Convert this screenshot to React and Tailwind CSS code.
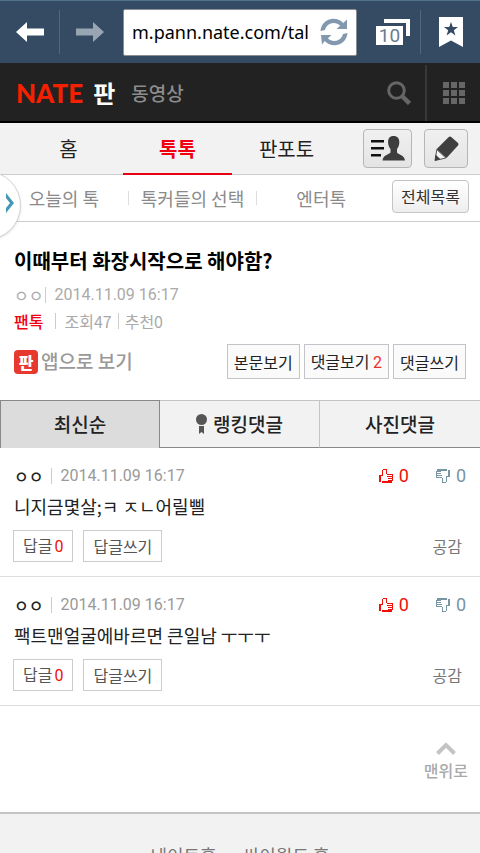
import clsx from "clsx";

const COMMENTS = [
  { id: 1, date: "2014.11.09 16:17", text: "니지금몇살;ㅋ ㅈㄴ어릴삘" },
  { id: 2, date: "2014.11.09 16:17", text: "팩트맨얼굴에바르면 큰일남 ㅜㅜㅜ" },
];

const SECTIONS = ["홈", "톡톡", "판포토"];
const CATEGORIES = ["오늘의 톡", "톡커들의 선택", "엔터톡"];

function ArrowIcon({ className }) {
  return (
    <svg viewBox="0 0 28 20" fill="currentColor" className={clsx("w-7 h-5", className)}>
      <path d="M0 10 11 0v6.5h17v7H11V20z" />
    </svg>
  );
}

function ReloadIcon() {
  return (
    <svg viewBox="0 0 28 28" className="w-7 h-7" fill="#8298ae">
      <path d="M.5 13C1 6 6.500 .8 13.500 .8c4.200 0 7.500 1.700 9.700 4.200L27 1.500V11H16.500l3.600-3.200C18.400 6 16.200 5 13.600 5 9.300 5 6 8 5 12z" />
      <path d="M27.500 15c-.5 7-6 12.200-13 12.200-4.200 0-7.500-1.700-9.700-4.200L2 26.500 1 17h10.500l-3.600 3.200c1.700 1.800 3.900 2.800 6.500 2.800 4.300 0 7.600-3 8.600-7z" />
    </svg>
  );
}

function ThumbIcon({ down, className }) {
  return (
    <svg
      viewBox="0 0 14 14"
      fill="currentColor"
      shapeRendering="crispEdges"
      className={clsx("w-[14px] h-[14px]", down && "rotate-180", className)}
    >
      <path d="M0 6h2v7H0zM3 12h10v2H3zM2 6h2v1H2zM3 1h1v6H3zM4 0h4v1H4zM7 1h1v4H7zM8 5h6v1H8zM13 6h1v6h-1zM8 7h5v1H8zM9 9h4v1H9zM9 11h4v1H9z" />
    </svg>
  );
}

function BrowserBar() {
  return (
    <div className="flex items-center h-[63px] bg-[#344b63] border-t border-[#4f7189]">
      <button type="button" aria-label="이전" className="flex items-center justify-center w-[60px] h-11 border-r border-[#53677b] text-white">
        <ArrowIcon />
      </button>
      <button type="button" aria-label="다음" className="flex items-center justify-center w-[59px] h-11 text-[#98a6b3]">
        <ArrowIcon className="-scale-x-100" />
      </button>
      <div className="flex flex-1 min-w-0 items-center h-[47px] ml-1 px-2 bg-white border border-[#8a8d91] rounded-xs">
        <input
          type="text"
          aria-label="주소"
          defaultValue="m.pann.nate.com/tal"
          className="flex-1 min-w-0 text-lg font-['Noto_Sans',sans-serif] text-black outline-none"
        />
        <button type="button" aria-label="새로고침">
          <ReloadIcon />
        </button>
      </div>
      <button type="button" aria-label="창 목록" className="flex items-center justify-center w-[64px] h-11 border-r border-[#53677b]">
        <svg viewBox="0 0 34 28" className="w-[34px] h-7 ml-2">
          <path d="M8 1h26v17h-4V5H8z" fill="#fff" />
          <path d="M0 8h27v19H0z" fill="#fff" />
          <text x="13.500" y="24" textAnchor="middle" className="font-['Roboto',sans-serif] text-[19px]" fill="#6a7b8f">
            10
          </text>
        </svg>
      </button>
      <button type="button" aria-label="북마크" className="flex items-center justify-center w-[59px] h-11">
        <svg viewBox="0 0 24 30" className="w-6 h-[30px]">
          <path d="M0 0h24v30l-12-6.500L0 30z" fill="#fff" />
          <path d="m12 5 1.800 5h5.200l-4.200 3.200 1.600 5.300-4.400-3.200-4.400 3.200 1.600-5.300L5 10h5.200z" fill="#344b63" />
        </svg>
      </button>
    </div>
  );
}

function SiteHeader() {
  return (
    <header className="flex items-center h-[60px] pt-[2px] pl-4 bg-[#222] border-b-2 border-black">
      <a href="#" className="font-['Lato',sans-serif] text-[26px] font-black text-[#f42000]">
        NATE
      </a>
      <a href="#" className="ml-[10px] text-2xl font-bold text-white">
        판
      </a>
      <a href="#" className="ml-4 text-[19px] font-medium text-[#8c8c8c]">
        동영상
      </a>
      <button type="button" aria-label="검색" className="flex items-center justify-center ml-auto w-[54px] h-full border-r-2 border-[#383838]">
        <svg viewBox="0 0 24 24" className="w-6 h-6" fill="none" stroke="#666">
          <circle cx="9.500" cy="9.500" r="7.800" strokeWidth="3" />
          <path d="m15 15 7.500 7.500" strokeWidth="4.500" />
        </svg>
      </button>
      <button type="button" aria-label="전체 메뉴" className="flex items-center justify-center w-[53px] h-full">
        <svg viewBox="0 0 22 22" className="w-[22px] h-[22px]" fill="#666">
          {[0, 8, 16].map((y) => [0, 8, 16].map((x) => <rect key={`${x}-${y}`} x={x} y={y} width="6" height="6" />))}
        </svg>
      </button>
    </header>
  );
}

function SectionNav() {
  const iconButton =
    "flex items-center justify-center h-[39px] rounded-sm border border-[#b5b5b5] bg-linear-to-b from-[#f0f0f0] to-[#e4e4e4]";

  return (
    <nav className="flex items-center h-[52px] pl-[14px] pr-3 bg-[#f2f2f2] border-b border-[#ccc]">
      <div className="flex flex-1 h-[52px] mr-[22px]">
        {SECTIONS.map((name) => (
          <a
            key={name}
            href="#"
            className={clsx(
              "flex flex-1 items-center justify-center text-xl",
              name === "톡톡" ? "pt-[2px] border-b-2 border-[#e60012] font-bold text-[#f00010]" : "text-[#222]"
            )}
          >
            {name}
          </a>
        ))}
      </div>
      <button type="button" aria-label="내 정보" className={clsx(iconButton, "w-[49px]")}>
        <svg viewBox="0 0 34 25" className="w-[34px] h-[25px]" fill="#3d3d3d">
          <path d="M0 4h13v2.500H0zM0 11h13v2.500H0zM0 18h10v2.500H0z" fill="#111" />
          <path d="M22.500 0c4 0 6 2.500 5.800 6.500-.1 3-1 5-2.300 6.500v3.500c1 2 7.500 2.500 8 8H11.500c.5-5.500 6.500-6 8-8V13c-1.300-1.500-2.300-3.500-2.400-6.500C17 2.500 18.500 0 22.500 0z" />
        </svg>
      </button>
      <button type="button" aria-label="글쓰기" className={clsx(iconButton, "w-11 ml-3")}>
        <svg viewBox="0 0 25 25" className="w-[25px] h-[25px]">
          <path d="M14.500 1.200q1.500-1.500 3 0l6.300 5.600q1.300 1.500 0 3L12.500 22 2.500 13.200z" fill="#3f3f3f" />
          <path d="M2.800 13.600 11.800 22 1 24.500z" fill="#f4f4f4" stroke="#555" />
          <path d="m1.500 18.500 5 4.700-5.700 1.600z" fill="#3f3f3f" />
        </svg>
      </button>
    </nav>
  );
}

function CategoryNav() {
  return (
    <nav className="relative flex items-center h-[47px] pr-[11px] border-b border-[#ccc]">
      <div className="flex flex-1 mr-[7px]">
        {CATEGORIES.map((name) => (
          <a
            key={name}
            href="#"
            className="flex flex-1 items-center justify-center h-[14px] text-lg whitespace-nowrap text-[#8a8a8a] border-r border-[#ddd] last:border-r-0"
          >
            {name}
          </a>
        ))}
      </div>
      <button type="button" className="w-[77px] h-[33px] mb-1 rounded-sm border border-[#c4c4c4] bg-linear-to-b from-white to-[#eee] text-base leading-7 text-[#333]">
        전체목록
      </button>
      {/* drawer handle, hangs over the left edge */}
      <button
        type="button"
        aria-label="메뉴 열기"
        className="absolute -left-12 -top-1 flex items-center justify-end w-[69px] h-[69px] pr-[6px] pb-[6px] rounded-full bg-white border border-[#d5d5d5] shadow"
      >
        <svg viewBox="0 0 8 20" className="w-2 h-5" fill="#4497b6">
          <path d="M0 0v5l4 5-4 5v5l8-10z" />
        </svg>
      </button>
    </nav>
  );
}

function Article() {
  const actionButton = "h-[35px] px-[6px] border border-[#c3c3c9] bg-[#fafafa] text-base text-[#222] whitespace-nowrap";

  return (
    <article className="px-[14px] pt-[25px] pb-[21px]">
      <h1 className="text-xl leading-7 font-bold text-black">이때부터 화장시작으로 해야함?</h1>
      <div className="flex items-center mt-[10px] h-5 text-base text-[#aaa]">
        <span>ㅇㅇ</span>
        <span className="w-px h-4 ml-[2px] mr-2 bg-[#ccc]" />
        <span className="font-['Roboto',sans-serif]">2014.11.09 16:17</span>
      </div>
      <div className="flex items-center mt-[6px] h-5 text-base text-[#aaa]">
        <a href="#" className="text-base font-medium text-[#f00010]">
          팬톡
        </a>
        <span className="w-px h-4 ml-3 mr-2 bg-[#ccc]" />
        <span>조회47</span>
        <span className="w-px h-4 mx-[6px] bg-[#ccc]" />
        <span>추천0</span>
      </div>
      <div className="flex items-center mt-[13px]">
        <a href="#" className="flex items-center text-[19px] font-medium text-[#999]">
          <span className="flex items-center justify-center w-6 h-6 mr-[3px] rounded bg-[#e8392f] text-base font-black text-white">
            판
          </span>
          앱으로 보기
        </a>
        <div className="flex gap-1 ml-auto">
          <button type="button" className={actionButton}>
            본문보기
          </button>
          <button type="button" className={actionButton}>
            댓글보기 <span className="font-['Roboto',sans-serif] text-[#ee3028]">2</span>
          </button>
          <button type="button" className={actionButton}>
            댓글쓰기
          </button>
        </div>
      </div>
    </article>
  );
}

function SortTabs() {
  return (
    <div className="grid grid-cols-3 h-12 text-[19px] font-medium text-[#222]">
      <button type="button" className="border border-b-0 border-[#888] bg-[#dcdcdc]">
        최신순
      </button>
      <button type="button" className="flex items-center justify-center border-y border-r border-t-[#c4c4c4] border-r-[#c4c4c4] border-b-[#888] bg-[#f2f2f2]">
        <svg viewBox="0 0 11 20" className="w-[11px] h-5 mr-[6px]" fill="#555">
          <circle cx="5.500" cy="5.500" r="5.500" />
          <path d="M3 12h5v8l-2.500-2L3 20z" />
        </svg>
        랭킹댓글
      </button>
      <button type="button" className="border-y border-t-[#c4c4c4] border-b-[#888] bg-[#f2f2f2]">
        사진댓글
      </button>
    </div>
  );
}

function Comment({ comment }) {
  const replyButton = "h-8 px-[9px] border border-[#ccc] bg-white text-base text-[#555]";

  return (
    <li className="px-[14px] pt-[18px] pb-[14px] border-b border-[#ddd]">
      <div className="flex items-center h-5 text-base">
        <span className="font-medium text-[#222]">ㅇㅇ</span>
        <span className="w-px h-4 ml-2 mr-2 bg-[#ccc]" />
        <span className="font-['Roboto',sans-serif] text-[#999]">{comment.date}</span>
        <button type="button" aria-label="추천" className="flex items-center ml-auto font-['Roboto',sans-serif] text-lg text-[#f01008]">
          <ThumbIcon className="mr-[6px]" />0
        </button>
        <button type="button" aria-label="반대" className="flex items-center ml-[27px] font-['Roboto',sans-serif] text-lg text-[#7795a3]">
          <ThumbIcon down className="mr-[6px]" />0
        </button>
      </div>
      <p className="mt-[6px] text-lg leading-7 text-[#222]">{comment.text}</p>
      <div className="flex items-center mt-[10px] -ml-px">
        <button type="button" className={replyButton}>
          답글<span className="ml-[2px] font-['Roboto',sans-serif] text-[#f01008]">0</span>
        </button>
        <button type="button" className={clsx(replyButton, "ml-[10px]")}>
          답글쓰기
        </button>
        <button type="button" className="ml-auto mr-1 text-base text-[#777]">
          공감
        </button>
      </div>
    </li>
  );
}

export default function App() {
  return (
    <div className="min-h-screen overflow-hidden bg-white font-['Noto_Sans_CJK_KR',sans-serif]">
      <BrowserBar />
      <SiteHeader />
      <SectionNav />
      <CategoryNav />
      <main>
        <Article />
        <SortTabs />
        <ul>
          {COMMENTS.map((comment) => (
            <Comment key={comment.id} comment={comment} />
          ))}
        </ul>
        <div className="flex justify-end pt-9 pb-[30px] pr-3">
          <a href="#" className="flex flex-col items-center text-base font-medium text-[#aaa]">
            <svg viewBox="0 0 20 13" className="w-5 h-[13px] mb-[3px]" fill="none" stroke="#c4c4c4" strokeWidth="4">
              <path d="m1.500 11.500 8.500-8.500 8.500 8.500" />
            </svg>
            맨위로
          </a>
        </div>
      </main>
      <footer className="flex justify-center gap-2 pt-[27px] pb-6 bg-[#f2f2f2] border-t-2 border-[#c4c4c4] text-lg text-[#777]">
        <a href="#">네이트홈</a>
        <span>·</span>
        <a href="#">싸이월드 홈</a>
      </footer>
    </div>
  );
}
